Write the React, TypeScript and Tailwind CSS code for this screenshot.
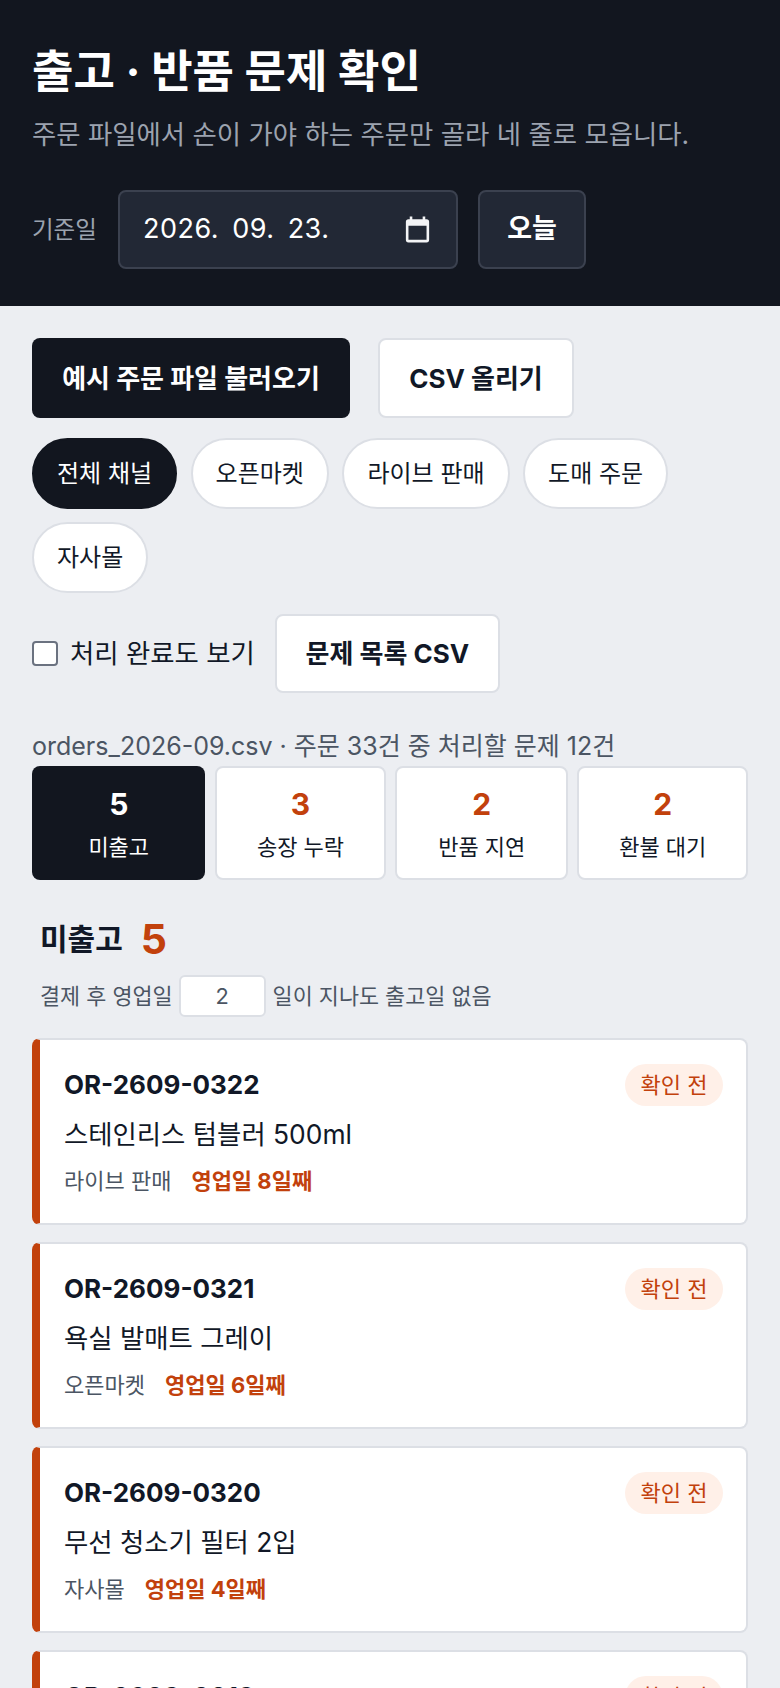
const font = "font-['Inter','Noto_Sans_CJK_KR',sans-serif]";

const channels = ['전체 채널', '오픈마켓', '라이브 판매', '도매 주문', '자사몰'];

const stats = [
  { count: 5, label: '미출고', active: true, width: 'w-[174px]' },
  { count: 3, label: '송장 누락', active: false, width: 'w-[171.5px]' },
  { count: 2, label: '반품 지연', active: false, width: 'w-[173px]' },
  { count: 2, label: '환불 대기', active: false, width: 'w-[171px]' },
];

const orders = [
  { id: 'OR-2609-0322', name: '스테인리스 텀블러 500ml', channel: '라이브 판매', days: '영업일 8일째' },
  { id: 'OR-2609-0321', name: '욕실 발매트 그레이', channel: '오픈마켓', days: '영업일 6일째' },
  { id: 'OR-2609-0320', name: '무선 청소기 필터 2입', channel: '자사몰', days: '영업일 4일째' },
  { id: 'OR-2609-0319', name: '접이식 수납 박스', channel: '도매 주문', days: '영업일 3일째' },
];

function CalendarIcon() {
  return (
    <svg width="31" height="31" viewBox="0 0 24 24" fill="#f3f4f6">
      <path d="M19 4h-1V2h-2v2H8V2H6v2H5a2 2 0 0 0-2 2v14a2 2 0 0 0 2 2h14a2 2 0 0 0 2-2V6a2 2 0 0 0-2-2zm0 16H5V9h14v11z" />
    </svg>
  );
}

function OrderCard({ order }: { order: (typeof orders)[number] }) {
  return (
    <div className="h-[187px] shrink-0 rounded-lg border-2 border-l-8 border-[#dcdfe5] border-l-[#c2410c] bg-white py-6 pr-[23px] pl-6">
      <div className="flex items-start justify-between">
        <div className="pt-[3px] text-[26px] leading-[36px] font-bold text-[#111827]">{order.id}</div>
        <span className="rounded-full bg-[#fff0e8] px-[15.5px] py-[5px] text-[22px] leading-[32px] text-[#c2410c]">확인 전</span>
      </div>
      <div className="mt-[8px] text-[26.4px] leading-[40px] text-[#111827]">{order.name}</div>
      <div className="mt-[11px] flex gap-5 text-[22px] leading-[32px]">
        <span className="text-[#4b5563]">{order.channel}</span>
        <span className="font-bold text-[#c2410c]">{order.days}</span>
      </div>
    </div>
  );
}

export default function App() {
  return (
    <div className={`${font} h-[1688px] overflow-hidden bg-[#eceef2]`}>
      <header className="h-[306px] bg-[#12161f] px-8 pt-[44px]">
        <h1 className="text-[45px] leading-[56px] font-bold whitespace-nowrap text-white">출고 · 반품 문제 확인</h1>
        <p className="mt-[14px] text-[26.4px] leading-[40px] whitespace-nowrap text-[#9ca3af]">주문 파일에서 손이 가야 하는 주문만 골라 네 줄로 모읍니다.</p>
        <div className="mt-[36px] flex items-center">
          <span className="w-[86px] text-[23.5px] text-[#9ca3af]">기준일</span>
          <div className="flex h-[79px] w-[340px] items-center justify-between rounded-lg border-2 border-[#3b414f] bg-[#222835] px-[23px] text-[27px] tracking-[0.5px] text-white [word-spacing:5px]">
            <span>2026. 09. 23.</span>
            <CalendarIcon />
          </div>
          <button className="ml-5 h-[79px] w-[108px] rounded-lg border-2 border-[#3b414f] bg-[#222835] text-[27px] font-semibold text-white">오늘</button>
        </div>
      </header>

      <main className="px-8 pt-8">
        <div className="flex gap-7">
          <button className="h-[80px] w-[318px] rounded-lg bg-[#12161f] text-[26px] font-bold text-white">예시 주문 파일 불러오기</button>
          <button className="h-[80px] w-[196px] rounded-lg border-2 border-[#dcdfe5] bg-white text-[26px] font-bold text-[#111827]">CSV 올리기</button>
        </div>

        <div className="mt-5 flex flex-wrap gap-x-[13.5px] gap-y-[13px]">
          {channels.map((channel, i) => (
            <button
              key={channel}
              className={`h-[71px] rounded-full border-2 px-[23px] text-[24px] ${i === 0 ? 'border-[#12161f] bg-[#12161f] text-white' : 'border-[#dcdfe5] bg-white text-[#111827]'}`}
            >
              {channel}
            </button>
          ))}
        </div>

        <div className="mt-[21px] flex items-center">
          <div className="h-[25px] w-[26px] rounded-[4px] border-2 border-[#6b7280] bg-white" />
          <span className="ml-3 text-[26.4px] text-[#111827]">처리 완료도 보기</span>
          <button className="ml-5 h-[79px] w-[225px] rounded-lg border-2 border-[#dcdfe5] bg-white text-[26px] font-bold text-[#111827]">문제 목록 CSV</button>
        </div>

        <p className="mt-[33px] text-[25px] leading-[40px] whitespace-nowrap text-[#4b5563]">orders_2026-09.csv · 주문 33건 중 처리할 문제 12건</p>

        <div className="flex gap-[9.5px]">
          {stats.map((stat) => (
            <div
              key={stat.label}
              className={`flex h-[114px] flex-col items-center justify-center rounded-lg ${stat.width} ${stat.active ? 'bg-[#12161f] text-white' : 'border-2 border-[#dcdfe5] bg-white text-[#111827]'}`}
            >
              <span className={`text-[30px] leading-[44px] font-bold ${stat.active ? 'text-white' : 'text-[#c2410c]'}`}>{stat.count}</span>
              <span className="mt-[3px] text-[22px] leading-[36px]">{stat.label}</span>
            </div>
          ))}
        </div>

        <section className="pt-[37px]">
          <div className="flex items-center gap-[18px] px-2">
            <h2 className="text-[30px] leading-[44px] font-bold text-[#111827]">미출고</h2>
            <span className="text-[41px] leading-[44px] font-bold text-[#c2410c]">5</span>
          </div>
          <div className="mt-[14px] flex items-center px-2 text-[21.8px] text-[#4b5563]">
            <span>결제 후 영업일</span>
            <div className="mr-[7px] ml-[6px] flex h-[42px] w-[87px] items-center justify-center rounded-md border-2 border-[#dcdfe5] bg-white">2</div>
            <span>일이 지나도 출고일 없음</span>
          </div>
          <div className="mt-[21px] flex flex-col gap-[17px]">
            {orders.map((order) => (
              <OrderCard key={order.id} order={order} />
            ))}
          </div>
        </section>
      </main>
    </div>
  );
}
